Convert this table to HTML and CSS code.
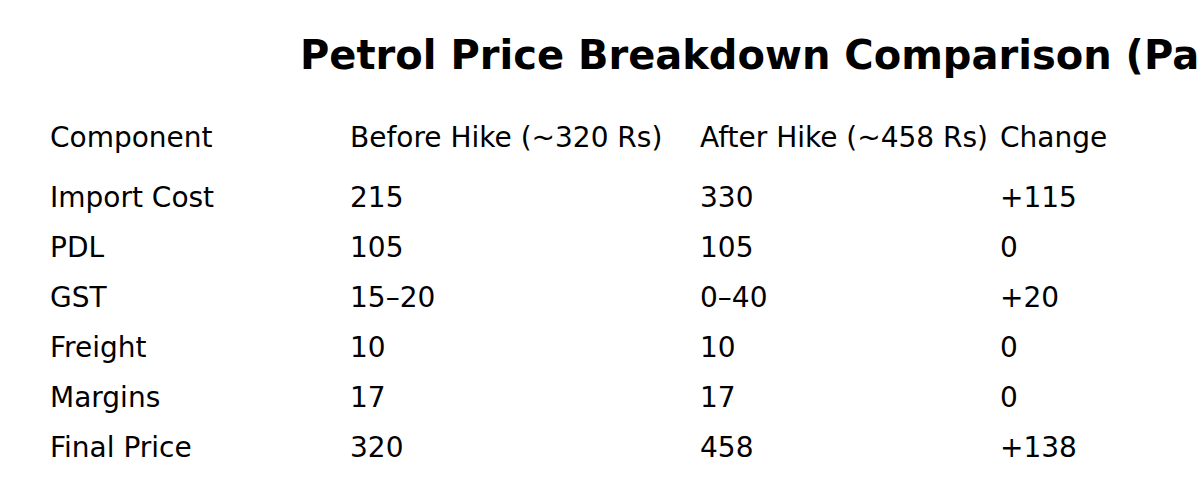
FILE: index.html
```html
<!DOCTYPE html>
<html>
<head>
<meta charset="utf-8">
<link rel="stylesheet" href="styles.css">
</head>
<body>
<div class="page">
  <h1 class="title">Petrol Price Breakdown Comparison (Pakistan)</h1>
  <div class="table">
    <div class="row head">
      <div>Component</div><div>Before Hike (~320 Rs)</div><div>After Hike (~458 Rs)</div><div>Change</div>
    </div>
    <div class="row"><div>Import Cost</div><div>215</div><div>330</div><div>+115</div></div>
    <div class="row"><div>PDL</div><div>105</div><div>105</div><div>0</div></div>
    <div class="row"><div>GST</div><div>15–20</div><div>0–40</div><div>+20</div></div>
    <div class="row"><div>Freight</div><div>10</div><div>10</div><div>0</div></div>
    <div class="row"><div>Margins</div><div>17</div><div>17</div><div>0</div></div>
    <div class="row"><div>Final Price</div><div>320</div><div>458</div><div>+138</div></div>
  </div>
</div>
</body>
</html>
```
FILE: styles.css
```css
html, body {
  margin: 0;
  padding: 0;
  background: #fff;
  overflow: hidden;
}
body {
  font-family: "DejaVu Sans", sans-serif;
  color: #000;
  width: 1200px;
  height: 500px;
}
.page {
  padding: 30px 0 0 50px;
}
.title {
  margin: 0 0 0 250px;
  font-size: 40px;
  font-weight: bold;
  line-height: 50px;
  white-space: nowrap;
}
.table {
  margin-top: 33px;
  font-size: 28px;
}
.row {
  display: grid;
  grid-template-columns: 300px 350px 300px auto;
  height: 50px;
  line-height: 50px;
  white-space: nowrap;
}
.row.head {
  margin-bottom: 10px;
}
```
